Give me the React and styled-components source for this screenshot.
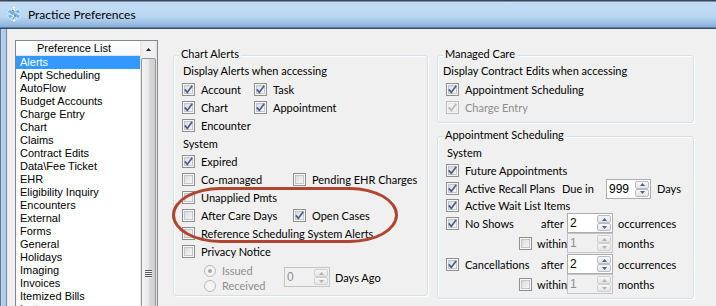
import React from "react";
import styled, { createGlobalStyle } from "styled-components";

const GlobalStyle = createGlobalStyle`
  html, body {
    margin: 0;
    padding: 0;
    background: #f0f0f0;
  }
  body {
    font-family: Lato, "Liberation Sans", Arial, sans-serif;
    font-size: 11px;
    color: #000;
  }
`;

const Window = styled.div`
  width: 716px;
  height: 306px;
  overflow: hidden;
  display: flex;
  flex-direction: column;
`;

const TitleBar = styled.div`
  height: 29px;
  flex-shrink: 0;
  box-sizing: border-box;
  display: flex;
  align-items: center;
  gap: 7px;
  padding: 0 0 1px 7px;
  background: linear-gradient(
    to bottom,
    #34455a 0,
    #34455a 1px,
    #c4ddf5 2px,
    #b9d6f2 17px,
    #a3c4e8 22px,
    #88afd9 27px,
    #3c4d62 28px
  );
  font-size: 12px;
`;

const Frame = styled.div`
  flex: 1;
  display: flex;
  min-height: 0;
`;

const SideFrame = styled.div`
  width: 8px;
  flex-shrink: 0;
  background: linear-gradient(
    to right,
    #62798f 0 1px,
    #b9d4f0 1px,
    #a8c6e9 6px,
    #7891ae 6px 7px,
    #e6e6e6 7px 8px
  );
`;

const Client = styled.div`
  flex: 1;
  display: flex;
  align-items: flex-start;
  padding: 11px 0 0 7px;
  background: #f0f0f0;
`;

// ---------- list box ----------
const ListBox = styled.div`
  width: 143px;
  height: 290px;
  flex-shrink: 0;
  box-sizing: border-box;
  border: 1px solid #828790;
  display: flex;
  background: #fff;
  font-family: "Liberation Sans", Arial, sans-serif;
  font-size: 11px;
`;

const ListPane = styled.div`
  flex: 1;
  display: flex;
  flex-direction: column;
  overflow: hidden;
`;

const ListHeader = styled.div`
  height: 14px;
  line-height: 14px;
  border-bottom: 1px solid #e2e3e4;
  text-align: center;
  padding-right: 8px;
  background: linear-gradient(#ffffff, #f6f7f9);
`;

const ListItem = styled.div`
  height: 13px;
  line-height: 13px;
  padding-left: 4px;
  white-space: nowrap;
  background: ${(p) => (p.$selected ? "#3399ff" : "transparent")};
  color: ${(p) => (p.$selected ? "#fff" : "#000")};
`;

const ScrollBar = styled.div`
  width: 17px;
  flex-shrink: 0;
  display: flex;
  flex-direction: column;
  background: linear-gradient(to right, #e3e3e3, #f0f0f0 3px, #f0f0f0 14px, #e3e3e3);
`;

const ScrollArrow = styled.div`
  height: 17px;
  display: flex;
  align-items: center;
  justify-content: center;
`;

const ScrollThumb = styled.div`
  flex: 1;
  margin: 0 1px;
  border: 1px solid #979797;
  border-radius: 2px;
  background: linear-gradient(to right, #f3f3f3, #e8e8e8 50%, #d9d9d9 51%, #cfcfcf);
  display: flex;
  justify-content: center;
`;

const Gripper = styled.div`
  margin-top: 211px;
  width: 7px;
  height: 8px;
  background: repeating-linear-gradient(to bottom, #5a5a5a 0 1px, #f2f2f2 1px 2px);
`;

// ---------- group boxes ----------
const Group = styled.div`
  position: relative;
  box-sizing: border-box;
  flex-shrink: 0;
  width: ${(p) => p.$w}px;
  height: ${(p) => p.$h}px;
  margin-top: ${(p) => p.$mt || 0}px;
  margin-left: ${(p) => p.$ml || 0}px;
  border: 1px solid #d5dfe5;
  border-radius: 3px;
  box-shadow: inset 1px 1px 0 #fff, 1px 1px 0 #fff;
  padding: ${(p) => p.$pad};
`;

const Legend = styled.span`
  position: absolute;
  top: -9px;
  left: 5px;
  padding: 0 2px;
  line-height: 14px;
  background: #f0f0f0;
  white-space: nowrap;
`;

const Column = styled.div`
  display: flex;
  flex-direction: column;
  flex-shrink: 0;
  margin-left: ${(p) => p.$ml || 0}px;
  width: ${(p) => (p.$w ? `${p.$w}px` : "auto")};
`;

const Row = styled.div`
  display: flex;
  align-items: ${(p) => (p.$top ? "flex-start" : "center")};
  height: ${(p) => p.$h || 18}px;
  margin-left: ${(p) => p.$ml || 0}px;
  margin-top: ${(p) => p.$mt || 0}px;
`;

const Cell = styled.div`
  display: flex;
  align-items: center;
  flex-shrink: 0;
  width: ${(p) => p.$w}px;
  justify-content: ${(p) => (p.$end ? "flex-end" : "flex-start")};
  padding-left: ${(p) => p.$pl || 0}px;
  box-sizing: border-box;
`;

const Text = styled.span`
  white-space: nowrap;
  color: ${(p) => (p.$disabled ? "#8d8d8d" : "#000")};
  margin-left: ${(p) => p.$ml || 0}px;
`;

// ---------- controls ----------
const CheckWrap = styled.span`
  display: inline-flex;
  align-items: center;
  gap: 6px;
  margin-right: ${(p) => p.$mr || 0}px;
`;

const Box = styled.span`
  width: 13px;
  height: 13px;
  box-sizing: border-box;
  flex-shrink: 0;
  border: 1px solid ${(p) => (p.$disabled ? "#bcbcbc" : "#8e8f8f")};
  background: ${(p) =>
    p.$disabled ? "#f4f4f4" : "linear-gradient(135deg, #cfd2d6, #eeeeee 60%, #fbfbfb)"};
  box-shadow: inset 0 0 0 1px #f6f6f6, inset 0 0 0 2px ${(p) => (p.$disabled ? "#e6e6e6" : "#c3c7cc")};
  display: flex;
  align-items: center;
  justify-content: center;
`;

const RadioDot = styled.span`
  width: 12px;
  height: 12px;
  box-sizing: border-box;
  flex-shrink: 0;
  border: 1px solid #bababa;
  border-radius: 50%;
  background: #f4f4f4;
  display: flex;
  align-items: center;
  justify-content: center;
  &::after {
    content: "";
    width: 4px;
    height: 4px;
    border-radius: 50%;
    background: ${(p) => (p.$on ? "#a8a8a8" : "transparent")};
  }
`;

const SpinBox = styled.div`
  width: ${(p) => p.$w}px;
  height: 20px;
  flex-shrink: 0;
  box-sizing: border-box;
  border: 1px solid ${(p) => (p.$disabled ? "#c1c4c8" : "#abadb3")};
  background: ${(p) => (p.$disabled ? "#f0f0f0" : "#fff")};
  display: flex;
`;

const SpinValue = styled.span`
  flex: 1;
  line-height: 18px;
  padding-left: 2px;
  font-family: "Liberation Sans", Arial, sans-serif;
  font-size: 12px;
  color: ${(p) => (p.$disabled ? "#8d8d8d" : "#000")};
`;

const SpinButtons = styled.div`
  width: 15px;
  display: flex;
  flex-direction: column;
  padding: 1px 1px 1px 0;
  box-sizing: border-box;
`;

const SpinButton = styled.div`
  flex: 1;
  border: 1px solid ${(p) => (p.$disabled ? "#d0d0d0" : "#b8bcc4")};
  border-radius: 2px;
  background: linear-gradient(#f7f7f7, #e4e4e4);
  display: flex;
  align-items: center;
  justify-content: center;
`;

const Oval = styled.div`
  position: absolute;
  left: -2px;
  top: 131px;
  width: 226px;
  height: 56px;
  box-sizing: border-box;
  border: 3px solid #b0462f;
  border-radius: 48px / 28px;
  pointer-events: none;
`;

function Check({ checked, disabled, children, mr }) {
  return (
    <CheckWrap $mr={mr}>
      <Box $disabled={disabled}>
        {checked && (
          <svg width="11" height="11" viewBox="0 0 11 11">
            <path
              d="M1.8 5.4 L4.3 8.4 L9.2 1.8"
              fill="none"
              stroke={disabled ? "#b4b4b4" : "#4a5d8e"}
              strokeWidth="1.7"
            />
          </svg>
        )}
      </Box>
      {children && <Text $disabled={disabled}>{children}</Text>}
    </CheckWrap>
  );
}

function Radio({ on, children }) {
  return (
    <CheckWrap>
      <RadioDot $on={on} />
      <Text $disabled>{children}</Text>
    </CheckWrap>
  );
}

function Arrow({ up, color }) {
  return (
    <svg width="5" height="3" viewBox="0 0 5 3">
      <polygon points={up ? "0,3 2.5,0 5,3" : "0,0 5,0 2.5,3"} fill={color} />
    </svg>
  );
}

function Spin({ value, width, disabled }) {
  const c = disabled ? "#b0b0b0" : "#4d6185";
  return (
    <SpinBox $w={width} $disabled={disabled}>
      <SpinValue $disabled={disabled}>{value}</SpinValue>
      <SpinButtons>
        <SpinButton $disabled={disabled}>
          <Arrow up color={c} />
        </SpinButton>
        <SpinButton $disabled={disabled}>
          <Arrow color={c} />
        </SpinButton>
      </SpinButtons>
    </SpinBox>
  );
}

function AppIcon() {
  return (
    <svg width="14" height="16" viewBox="0 0 14 16">
      <g transform="translate(7 8)">
        {[0, 60, 120].map((a) => (
          <rect
            key={a}
            x="-2"
            y="-6.5"
            width="4"
            height="13"
            rx="1"
            fill="#74b6e6"
            stroke="#e8f3fc"
            strokeWidth="0.8"
            transform={`rotate(${a})`}
          />
        ))}
        <rect x="-0.8" y="-7.5" width="1.6" height="15" fill="#ffffff" />
        <path d="M-2 -4 Q1 -3 0 -1 Q-1 1 1.5 2 Q0 3 -1 5" fill="none" stroke="#2c5d8c" strokeWidth="0.9" />
      </g>
    </svg>
  );
}

const items = [
  "Alerts",
  "Appt Scheduling",
  "AutoFlow",
  "Budget Accounts",
  "Charge Entry",
  "Chart",
  "Claims",
  "Contract Edits",
  "Data\\Fee Ticket",
  "EHR",
  "Eligibility Inquiry",
  "Encounters",
  "External",
  "Forms",
  "General",
  "Holidays",
  "Imaging",
  "Invoices",
  "Itemized Bills",
  "Letters",
];

export default function App() {
  return (
    <>
      <GlobalStyle />
      <Window>
        <TitleBar>
          <AppIcon />
          <span>Practice Preferences</span>
        </TitleBar>
        <Frame>
          <SideFrame />
          <Client>
            <ListBox>
              <ListPane>
                <ListHeader>Preference List</ListHeader>
                {items.map((it, i) => (
                  <ListItem key={it} $selected={i === 0}>
                    {it}
                  </ListItem>
                ))}
              </ListPane>
              <ScrollBar>
                <ScrollArrow>
                  <Arrow up color="#222" />
                </ScrollArrow>
                <ScrollThumb>
                  <Gripper />
                </ScrollThumb>
              </ScrollBar>
            </ListBox>

            <Group $w={255} $h={241} $mt={15} $ml={15} $pad="5px 0 0 8px">
              <Legend>Chart Alerts</Legend>
              <Row $h={19} $ml={1}>
                <Text>Display Alerts when accessing</Text>
              </Row>
              <Row>
                <Cell $w={72}>
                  <Check checked>Account</Check>
                </Cell>
                <Check checked>Task</Check>
              </Row>
              <Row>
                <Cell $w={72}>
                  <Check checked>Chart</Check>
                </Cell>
                <Check checked>Appointment</Check>
              </Row>
              <Row>
                <Check checked>Encounter</Check>
              </Row>
              <Row $ml={1}>
                <Text>System</Text>
              </Row>
              <Row>
                <Check checked>Expired</Check>
              </Row>
              <Row>
                <Cell $w={111}>
                  <Check>Co-managed</Check>
                </Cell>
                <Check>Pending EHR Charges</Check>
              </Row>
              <Row>
                <Check>Unapplied Pmts</Check>
              </Row>
              <Row>
                <Cell $w={111}>
                  <Check>After Care Days</Check>
                </Cell>
                <Check checked>Open Cases</Check>
              </Row>
              <Row>
                <Check>Reference Scheduling System Alerts</Check>
              </Row>
              <Row>
                <Check>Privacy Notice</Check>
              </Row>
              <Row $h={30} $mt={3} $top>
                <Column $ml={22} $w={80}>
                  <Row $h={15}>
                    <Radio on>Issued</Radio>
                  </Row>
                  <Row $h={15}>
                    <Radio>Received</Radio>
                  </Row>
                </Column>
                <Row $h={20} $mt={4}>
                  <Spin value="0" width={46} disabled />
                  <Text $ml={5}>Days Ago</Text>
                </Row>
              </Row>
              <Oval />
            </Group>

            <Column $ml={9}>
              <Group $w={257} $h={68} $mt={15} $pad="5px 0 0 5px">
                <Legend>Managed Care</Legend>
                <Row $h={19}>
                  <Text>Display Contract Edits when accessing</Text>
                </Row>
                <Row $ml={3}>
                  <Check checked>Appointment Scheduling</Check>
                </Row>
                <Row $ml={3}>
                  <Check checked disabled>
                    Charge Entry
                  </Check>
                </Row>
              </Group>

              <Group $w={257} $h={163} $mt={13} $pad="6px 0 0 8px">
                <Legend>Appointment Scheduling</Legend>
                <Row $ml={1}>
                  <Text>System</Text>
                </Row>
                <Row>
                  <Check checked>Future Appointments</Check>
                </Row>
                <Row $h={19}>
                  <Cell $w={116}>
                    <Check checked>Active Recall Plans</Check>
                  </Cell>
                  <Cell $w={44}>
                    <Text>Due in</Text>
                  </Cell>
                  <Spin value="999" width={45} />
                  <Text $ml={6}>Days</Text>
                </Row>
                <Row $h={15}>
                  <Check checked>Active Wait List Items</Check>
                </Row>
                <Row $h={20}>
                  <Cell $w={91}>
                    <Check checked>No Shows</Check>
                  </Cell>
                  <Cell $w={30} $pl={4}>
                    <Text>after</Text>
                  </Cell>
                  <Spin value="2" width={46} />
                  <Text $ml={5}>occurrences</Text>
                </Row>
                <Row $h={20}>
                  <Cell $w={91} $end>
                    <Check mr={5} />
                  </Cell>
                  <Cell $w={30}>
                    <Text>within</Text>
                  </Cell>
                  <Spin value="1" width={46} disabled />
                  <Text $ml={5}>months</Text>
                </Row>
                <Row $h={20} $mt={1}>
                  <Cell $w={91}>
                    <Check checked>Cancellations</Check>
                  </Cell>
                  <Cell $w={30} $pl={4}>
                    <Text>after</Text>
                  </Cell>
                  <Spin value="2" width={46} />
                  <Text $ml={5}>occurrences</Text>
                </Row>
                <Row $h={20}>
                  <Cell $w={91} $end>
                    <Check mr={5} />
                  </Cell>
                  <Cell $w={30}>
                    <Text>within</Text>
                  </Cell>
                  <Spin value="1" width={46} disabled />
                  <Text $ml={5}>months</Text>
                </Row>
              </Group>
            </Column>
          </Client>
        </Frame>
      </Window>
    </>
  );
}
